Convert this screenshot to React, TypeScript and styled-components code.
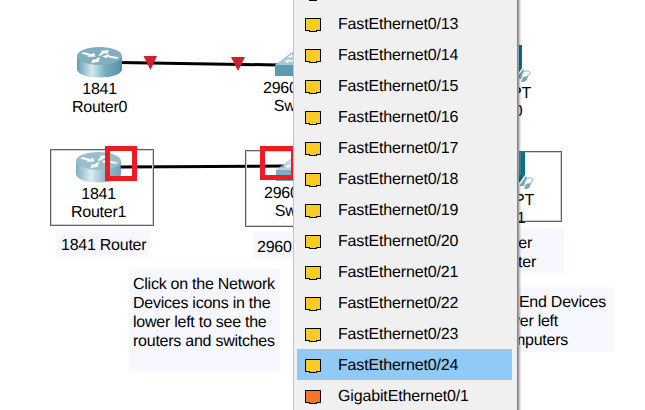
import React from "react";
import styled, { createGlobalStyle } from "styled-components";

const GlobalStyle = createGlobalStyle`
  body { margin: 0; background: #fff; overflow: hidden; }
`;

const Workspace = styled.main`
  position: relative;
  width: 645px;
  height: 410px;
  overflow: hidden;
  background: #fff;
  color: #000;
  font: 16px/18px "Liberation Sans", Arial, sans-serif;
  letter-spacing: -0.25px;
  text-rendering: geometricPrecision;
`;

const Wires = styled.svg`
  position: absolute;
  inset: 0;
`;

const Selection = styled.div<{ $x: number; $y: number; $w: number; $h: number }>`
  position: absolute;
  box-sizing: border-box;
  left: ${(p) => p.$x}px;
  top: ${(p) => p.$y}px;
  width: ${(p) => p.$w}px;
  height: ${(p) => p.$h}px;
  border: 1px solid #606060;
  box-shadow: inset 0 0 0 1px #d0d0d0;
`;

const Highlight = styled(Selection)`
  border: 5px solid #ed1c24;
  box-shadow: none;
`;

const DeviceNode = styled.div<{ $x: number; $y: number }>`
  position: absolute;
  left: ${(p) => p.$x}px;
  top: ${(p) => p.$y}px;
  display: flex;
  flex-direction: column;
  align-items: center;
  white-space: nowrap;
`;

const DeviceArt = styled.svg<{ $gap: number; $faded?: boolean }>`
  display: block;
  overflow: visible;
  margin-bottom: ${(p) => p.$gap}px;
  opacity: ${(p) => (p.$faded ? 0.8 : 1)};
`;

const NodeText = styled.span<{ $trail?: number }>`
  padding-right: ${(p) => p.$trail ?? 0}px;
`;

const Note = styled.div<{ $x: number; $y: number; $w: number; $h: number; $pad: string; $end?: boolean }>`
  position: absolute;
  box-sizing: border-box;
  left: ${(p) => p.$x}px;
  top: ${(p) => p.$y}px;
  width: ${(p) => p.$w}px;
  height: ${(p) => p.$h}px;
  padding: ${(p) => p.$pad};
  display: flex;
  flex-direction: column;
  align-items: ${(p) => (p.$end ? "flex-end" : "flex-start")};
  background: #f7f8ff;
  line-height: 19px;
  white-space: nowrap;
`;

const NoteLine = styled.span<{ $inset?: number }>`
  padding-right: ${(p) => p.$inset ?? 0}px;
`;

const Menu = styled.ul`
  position: absolute;
  box-sizing: border-box;
  left: 293px;
  top: -27px;
  width: 225px;
  height: 450px;
  margin: 0;
  padding: 4px 5px 0 3px;
  list-style: none;
  background: #f0f0f0;
  border-left: 1px solid #c4c4c4;
  border-right: 1px solid #858585;
  box-shadow: 1px 0 0 #a0a0a0, 2px 0 2px rgba(0, 0, 0, 0.3);
`;

const MenuItem = styled.li<{ $active: boolean }>`
  display: flex;
  align-items: center;
  height: 31px;
  padding-left: 8px;
  gap: 17px;
  background: ${(p) => (p.$active ? "#91c9f7" : "transparent")};
  letter-spacing: -0.15px;
  white-space: nowrap;
`;

const MenuLabel = styled.span`
  padding-top: 3px;
`;

const PortSvg = styled.svg`
  flex: none;
  width: 16px;
  height: 14px;
  margin-top: 3px;
`;

function PortIcon({ color }: { color: string }) {
  return (
    <PortSvg viewBox="0 0 16 14" shapeRendering="crispEdges">
      <path d="M0 0H16V13H12V14H4V13H0z" fill="#000" />
      <path d="M1 1H15V12H11V13H5V12H1z" fill={color} />
    </PortSvg>
  );
}

function RouterArt({ id, faded }: { id: string; faded?: boolean }) {
  return (
    <DeviceArt width="45" height="31" viewBox="0 0 45 31" $gap={3} $faded={faded}>
      <defs>
        <linearGradient id={id}>
          <stop offset="0" stopColor="#5f9db2" />
          <stop offset=".33" stopColor="#d5e9ef" />
          <stop offset=".62" stopColor="#79aec0" />
          <stop offset="1" stopColor="#4f91a8" />
        </linearGradient>
      </defs>
      <path d="M0 9v13c0 5 10 8.500 22.500 8.500S45 27 45 22V9z" fill={`url(#${id})`} />
      <ellipse cx="22.500" cy="9" rx="22.500" ry="9" fill="#80afbf" />
      <g fill="#fff">
        <path d="M4 6.500L7 5l7.500 2.300 2.500-1.500L18.500 9.500 10 10l2.200-1.300z" />
        <path d="M21.500 8.500l3.500-4-2-.7 9-.6-1.500 3.700-2-.8-5.500 3z" />
        <path d="M25.500 9.500l6.500-2.700-.5 1.700 10 1.700-1.500 1.700-9.500-1.900-1 1.500z" />
        <path d="M23.500 10.500l-2 3.500 1.500.6-9 1.600 2-4.200 1.800.8 3.500-2.300z" />
      </g>
    </DeviceArt>
  );
}

function SwitchArt({ faded }: { faded?: boolean }) {
  return (
    <DeviceArt width="52" height="24" viewBox="0 0 52 24" $gap={4} $faded={faded}>
      <path d="M0 13L17 0h35v13z" fill="#a5cad6" />
      <path d="M0 13h52v11H0z" fill="#5b9bb0" />
      <path d="M13 5l4-3v1.500h8V5h-9v1.500zM9 9.500L14 7v1h8v1.500h-9V11z" fill="#fff" />
    </DeviceArt>
  );
}

function PcArt() {
  return (
    <DeviceArt width="20" height="38" viewBox="0 0 20 38" $gap={2}>
      <path d="M0 0h11v23L6 30H0z" fill="#087287" />
      <path d="M0 0h7v22L0 30z" fill="#50899a" />
      <path d="M10 28q7-4 9-.5 0 2.500-4 4.500" fill="none" stroke="#a5cbd6" strokeWidth="1.200" />
      <path d="M6 33l6-9 1 1-3 9H6zM12 32l5-1-1 4-3 2h-3z" fill="#75a9b9" />
    </DeviceArt>
  );
}

const ports = [
  { name: "", color: "#f9cb25" },
  ...Array.from({ length: 12 }, (_, i) => ({ name: `FastEthernet0/${13 + i}`, color: "#f9cb25" })),
  { name: "GigabitEthernet0/1", color: "#fb7326" },
];

export default function App() {
  return (
    <>
      <GlobalStyle />
      <Workspace>
        <Wires width="645" height="410">
          <path d="M120 62.500L278 65M120 167L284 166" stroke="#000" strokeWidth="3" />
          <path d="M143.500 56h13.500l-6.500 14zM231 57h14l-7 14z" fill="#d11f2f" />
        </Wires>
        <Selection $x={50} $y={149} $w={104} $h={77} />
        <Selection $x={245} $y={150} $w={120} $h={77} />
        <Selection $x={460} $y={151} $w={102} $h={71} />

        <DeviceNode $x={72} $y={47}>
          <RouterArt id="router-a" />
          <NodeText>1841</NodeText>
          <NodeText>Router0</NodeText>
        </DeviceNode>
        <DeviceNode $x={71} $y={152}>
          <RouterArt id="router-b" faded />
          <NodeText>1841</NodeText>
          <NodeText>Router1</NodeText>
        </DeviceNode>
        <DeviceNode $x={263} $y={52}>
          <SwitchArt />
          <NodeText>2960-24TT</NodeText>
          <NodeText>Switch0</NodeText>
        </DeviceNode>
        <DeviceNode $x={264} $y={157}>
          <SwitchArt faded />
          <NodeText>2960-24TT</NodeText>
          <NodeText>Switch1</NodeText>
        </DeviceNode>
        <DeviceNode $x={511} $y={45}>
          <PcArt />
          <NodeText>PT</NodeText>
          <NodeText $trail={6}>0</NodeText>
        </DeviceNode>
        <DeviceNode $x={514} $y={152}>
          <PcArt />
          <NodeText>PT</NodeText>
          <NodeText $trail={6}>1</NodeText>
        </DeviceNode>

        <Highlight $x={105} $y={146} $w={32} $h={35} />
        <Highlight $x={260} $y={146} $w={36} $h={34} />

        <Note $x={56} $y={230} $w={94} $h={27} $pad="6px 5px">1841 Router</Note>
        <Note $x={253} $y={232} $w={100} $h={27} $pad="6px 4px">2960</Note>
        <Note $x={129} $y={269} $w={151} $h={103} $pad="6px 4px">
          <NoteLine>Click on the Network</NoteLine>
          <NoteLine>Devices icons in the</NoteLine>
          <NoteLine>lower left to see the</NoteLine>
          <NoteLine>routers and switches</NoteLine>
        </Note>
        <Note $x={470} $y={228} $w={94} $h={45} $pad="6px 0" $end>
          <NoteLine $inset={32}>er</NoteLine>
          <NoteLine $inset={28}>ter</NoteLine>
        </Note>
        <Note $x={460} $y={287} $w={154} $h={65} $pad="6px 0" $end>
          <NoteLine $inset={8}>End Devices</NoteLine>
          <NoteLine $inset={56}>ver left</NoteLine>
          <NoteLine $inset={46}>mputers</NoteLine>
        </Note>

        <Menu>
          {ports.map((port) => (
            <MenuItem key={port.name} $active={port.name === "FastEthernet0/24"}>
              <PortIcon color={port.color} />
              <MenuLabel>{port.name}</MenuLabel>
            </MenuItem>
          ))}
        </Menu>
      </Workspace>
    </>
  );
}
